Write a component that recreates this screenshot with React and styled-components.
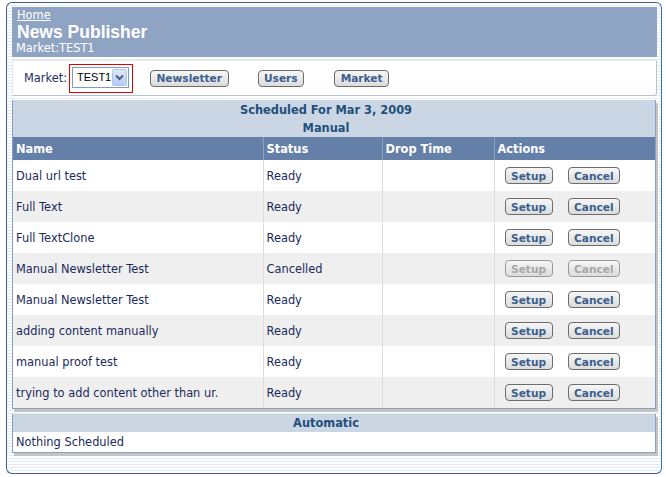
import styled, { createGlobalStyle } from "styled-components";

const GlobalStyle = createGlobalStyle`
  body {
    margin: 0;
    background: #fff;
    font-family: "DejaVu Sans", Verdana, sans-serif;
  }
`;

const rows = [
  { name: "Dual url test", status: "Ready" },
  { name: "Full Text", status: "Ready" },
  { name: "Full TextClone", status: "Ready" },
  { name: "Manual Newsletter Test", status: "Cancelled", disabled: true },
  { name: "Manual Newsletter Test", status: "Ready" },
  { name: "adding content manually", status: "Ready" },
  { name: "manual proof test", status: "Ready" },
  { name: "trying to add content other than ur.", status: "Ready" },
];

const Frame = styled.div`
  box-sizing: border-box;
  width: 656px;
  height: 472px;
  margin: 2px 0 0 6px;
  padding: 4px 4px 0 5px;
  border: 1px solid #3f5f8f;
  border-right-color: #2f72c0;
  border-radius: 6px;
  background: repeating-linear-gradient(
    to bottom,
    #ffffff 0px,
    #ffffff 2px,
    #e4ebf6 2px,
    #e4ebf6 3px
  );
`;

const Header = styled.div`
  height: 50px;
  box-sizing: border-box;
  padding: 2px 5px 0;
  background: #8fa3c2;
  color: #fff;
`;

const HomeLink = styled.a`
  display: block;
  font-size: 11.4px;
  line-height: 13px;
  color: #fff;
  text-decoration: underline;
`;

const Title = styled.div`
  font-family: "Liberation Sans", Arial, sans-serif;
  font-weight: bold;
  font-size: 17.5px;
  line-height: 18px;
  padding-top: 1px;
`;

const SubTitle = styled.div`
  font-size: 11.4px;
  line-height: 15px;
  margin-left: -1px;
`;

const Toolbar = styled.div`
  margin-top: 3px;
  height: 36px;
  box-sizing: border-box;
  display: flex;
  align-items: center;
  padding-left: 11px;
  background: #fff;
  border: 1px solid #e3e8ef;
  border-bottom-color: #b8c2d0;
  border-right-color: #b8c2d0;
  border-radius: 0 0 3px 0;
`;

const Label = styled.span`
  font-size: 11.4px;
  color: #1f2f5f;
  margin-right: 2px;
`;

const SelectHighlight = styled.div`
  width: 64px;
  height: 29px;
  box-sizing: border-box;
  border: 1px solid #e00000;
  padding: 2px;
  margin-right: 17px;
`;

const SelectBox = styled.div`
  display: flex;
  height: 21px;
  width: 57px;
  box-sizing: border-box;
  border: 1px solid #7f9db9;
  background: #fff;
`;

const SelectText = styled.span`
  flex: 1;
  font-family: "Liberation Sans", Arial, sans-serif;
  font-size: 11px;
  line-height: 18px;
  padding-left: 4px;
  color: #000;
`;

const SelectArrow = styled.span`
  width: 15px;
  margin: 1px;
  display: flex;
  align-items: center;
  justify-content: center;
  background: linear-gradient(#dce7fb, #b7cbf2);
  border: 1px solid #b3c6ec;
  border-radius: 2px;
`;

const Button = styled.button`
  height: 17px;
  box-sizing: border-box;
  padding: 0 5.5px;
  margin-right: ${(p) => p.$gap || 0}px;
  font-family: "DejaVu Sans", Verdana, sans-serif;
  font-weight: bold;
  font-size: 10.6px;
  line-height: 14px;
  color: ${(p) => (p.disabled ? "#a7a7a7" : "#3a5f8e")};
  background: linear-gradient(#f6f6f6, #dcdcdc);
  border: 1px solid ${(p) => (p.disabled ? "#9a9a9a" : "#6c6c6c")};
  border-radius: 4px;
`;

const Panel = styled.div`
  margin-top: ${(p) => p.$top}px;
  margin-right: 1px;
  background: #cbd6e5;
  border-left: 1px solid #8ba0c0;
  border-right: 1px solid #8ba0c0;
  border-bottom: 1px solid #8ba0c0;
  box-shadow: 2px 3px 0 #c4c4c4;
`;

const PanelTitle = styled.div`
  text-align: center;
  font-weight: bold;
  font-size: 11.4px;
  line-height: 18px;
  color: #1f4f7a;
  padding-right: 16px;
  padding-top: ${(p) => p.$top || 0}px;
`;

const Table = styled.table`
  width: 100%;
  border-collapse: collapse;
  table-layout: fixed;
  font-size: 11.4px;
`;

const HeadCell = styled.th`
  box-sizing: border-box;
  width: ${(p) => (p.$w ? `${p.$w}px` : "auto")};
  height: 23px;
  padding: 1px 3px 0;
  text-align: left;
  font-weight: bold;
  color: #fff;
  background: #647fa8;
  border-left: 1px solid #8ea2c2;
  &:first-child {
    border-left: none;
  }
`;

const Row = styled.tr`
  background: ${(p) => (p.$alt ? "#efefef" : "#fff")};
`;

const Cell = styled.td`
  box-sizing: border-box;
  height: 31px;
  padding: 0 3px;
  color: #1b2a5c;
  border-left: 1px solid #dcdcdc;
  white-space: nowrap;
  overflow: hidden;
  &:first-child {
    border-left: none;
  }
`;

const ActionCell = styled(Cell)`
  padding-left: 10px;
`;

const EmptyRow = styled.div`
  height: 20px;
  padding-left: 3px;
  background: #fff;
  font-size: 11.4px;
  line-height: 20px;
  color: #1b2a5c;
`;

const Chevron = () => (
  <svg width="9" height="7" viewBox="0 0 9 7">
    <path d="M1 1.5 L4.5 5 L8 1.5" fill="none" stroke="#4d6185" strokeWidth="2" />
  </svg>
);

const App = () => {
  return (
    <>
      <GlobalStyle />
      <Frame>
        <Header>
          <HomeLink href="#">Home</HomeLink>
          <Title>News Publisher</Title>
          <SubTitle>Market:TEST1</SubTitle>
        </Header>
        <Toolbar>
          <Label>Market:</Label>
          <SelectHighlight>
            <SelectBox>
              <SelectText>TEST1</SelectText>
              <SelectArrow>
                <Chevron />
              </SelectArrow>
            </SelectBox>
          </SelectHighlight>
          <Button $gap={29}>Newsletter</Button>
          <Button $gap={30}>Users</Button>
          <Button>Market</Button>
        </Toolbar>
        <Panel $top={4}>
          <PanelTitle $top={1}>Scheduled For Mar 3, 2009</PanelTitle>
          <PanelTitle>Manual</PanelTitle>
          <Table>
            <thead>
              <tr>
                <HeadCell $w={250}>Name</HeadCell>
                <HeadCell $w={119}>Status</HeadCell>
                <HeadCell $w={112}>Drop Time</HeadCell>
                <HeadCell>Actions</HeadCell>
              </tr>
            </thead>
            <tbody>
              {rows.map((r, i) => (
                <Row key={i} $alt={i % 2 === 1}>
                  <Cell>{r.name}</Cell>
                  <Cell>{r.status}</Cell>
                  <Cell></Cell>
                  <ActionCell>
                    <Button $gap={15} disabled={r.disabled}>
                      Setup
                    </Button>
                    <Button disabled={r.disabled}>Cancel</Button>
                  </ActionCell>
                </Row>
              ))}
            </tbody>
          </Table>
        </Panel>
        <Panel $top={5}>
          <PanelTitle>Automatic</PanelTitle>
          <EmptyRow>Nothing Scheduled</EmptyRow>
        </Panel>
      </Frame>
    </>
  );
};

export default App;
